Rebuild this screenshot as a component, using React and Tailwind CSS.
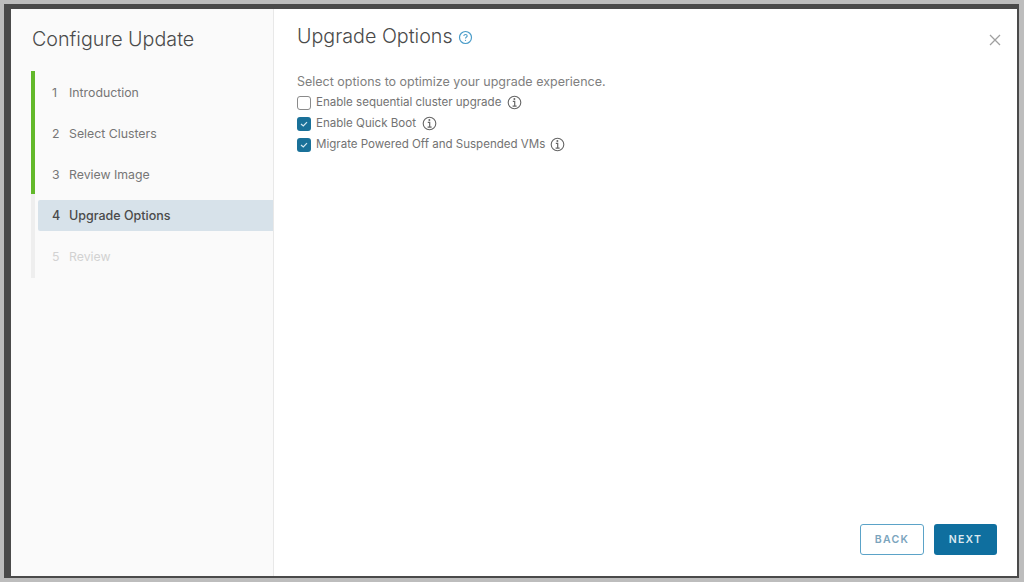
import React from "react";

function Info() {
  return (
    <svg width="15" height="15" viewBox="0 0 15 15" fill="none" stroke="#666" className="shrink-0">
      <circle cx="7.5" cy="7.5" r="6.3" strokeWidth="1.1" />
      <path d="M5.8 6.4H7.7V11M5.6 11.1H9.6" strokeWidth="1.2" />
      <circle cx="7.4" cy="4.1" r="1" fill="#666" stroke="none" />
    </svg>
  );
}

function Check({ checked }) {
  return checked ? (
    <span className="flex h-[14px] w-[14px] shrink-0 items-center justify-center rounded-[3px] bg-[#1a7199]">
      <svg width="10" height="10" viewBox="0 0 10 10" fill="none" stroke="#d5e8f1" strokeWidth="1.2">
        <path d="M2 5L4.3 7L8 3.2" />
      </svg>
    </span>
  ) : (
    <span className="h-[14px] w-[14px] shrink-0 rounded-[3px] border border-[#8a8a8a] bg-white" />
  );
}

function Option({ label, checked, gap }) {
  return (
    <div className="flex h-[21px] items-center">
      <Check checked={checked} />
      <span className="ml-[5px] text-[11.55px] text-[#737373]">{label}</span>
      <span className={gap}><Info /></span>
    </div>
  );
}

function Step({ n, label, state, bar, last }) {
  const rowCls =
    state === "active"
      ? "bg-[#d7e2ea] text-[#4a4a4a] font-medium text-[12.5px]"
      : state === "disabled"
        ? "text-[#d2d2d2] text-[12.3px]"
        : "text-[#767676] text-[12.3px]";
  return (
    <div className={`border-l-4 pl-[3px] pt-[6px] ${last ? "pb-[6px]" : "pb-[4px]"} ${bar}`}>
      <div className={`flex h-[31px] items-center rounded-l-[2px] pl-[14px] pt-[1px] ${rowCls}`}>
        <span className="w-[17px]">{n}</span>
        <span>{label}</span>
      </div>
    </div>
  );
}

export default function App() {
  return (
    <div className="h-[582px] w-[1024px] overflow-hidden bg-[#bdbdbd] pb-[4px] pl-[4px] pr-[5px] pt-[4px] font-['Inter',sans-serif]">
      <div className="h-full bg-[#4a4a4a] pb-[2px] pl-[7px] pr-[2px] pt-[5px]">
        <div className="flex h-full bg-white">
          <aside className="flex w-[263px] shrink-0 flex-col border-r border-[#e8e8e8] bg-[#fafafa] pl-[20px]">
            <h1 className="mt-[17px] h-[45px] pl-px text-[19.7px] font-light leading-[26px] text-[#4a4a4a]">Configure Update</h1>
            <div>
              <Step n="1" label="Introduction" bar="border-[#62b82a]" />
              <Step n="2" label="Select Clusters" bar="border-[#62b82a]" />
              <Step n="3" label="Review Image" bar="border-[#62b82a]" />
              <Step n="4" label="Upgrade Options" state="active" bar="border-[#eeeeee]" />
              <Step n="5" label="Review" state="disabled" bar="border-[#eeeeee]" last />
            </div>
          </aside>
          <main className="flex min-w-0 flex-1 flex-col pl-[23px] pr-[20px]">
            <div className="flex items-start justify-between">
              <div className="mt-[13px] flex items-center">
                <h2 className="pt-[1px] text-[19.7px] font-light leading-[26px] text-[#4a4a4a]">Upgrade Options</h2>
                <svg width="15" height="15" viewBox="0 0 14 14" fill="none" className="ml-[5px] mt-[3px]">
                  <circle cx="7" cy="7" r="5.6" stroke="#4a9cc9" strokeWidth="1.1" />
                  <path d="M5.4 5.6C5.5 4.6 6.2 4.2 7 4.2C7.9 4.2 8.6 4.7 8.6 5.5C8.6 6.5 7 6.6 7 7.9" stroke="#4a9cc9" strokeWidth="1" />
                  <circle cx="7" cy="9.6" r="0.6" fill="#4a9cc9" />
                </svg>
              </div>
              <svg width="14" height="14" viewBox="0 0 14 14" stroke="#a0a0a0" strokeWidth="1.3" className="-mr-[5px] mt-[24px]">
                <path d="M2 2L12 12M12 2L2 12" />
              </svg>
            </div>
            <p className="mt-[23px] text-[12.5px] leading-[20px] text-[#808080]">Select options to optimize your upgrade experience.</p>
            <div className="flex flex-col">
              <Option label="Enable sequential cluster upgrade" gap="ml-[6px]" />
              <Option label="Enable Quick Boot" checked gap="ml-[6px]" />
              <Option label="Migrate Powered Off and Suspended VMs" checked gap="ml-[5px]" />
            </div>
            <div className="mt-auto mb-[21px] flex justify-end gap-[10px]">
              <button className="h-[31px] w-[64px] rounded-[3px] border border-[#5ba3c8] bg-white text-[10.5px] font-semibold tracking-[1.3px] text-[#7ba4bd]">BACK</button>
              <button className="h-[31px] w-[63px] rounded-[3px] bg-[#0f6f9f] text-[10.5px] font-semibold tracking-[1.3px] text-[#dce9f0]">NEXT</button>
            </div>
          </main>
        </div>
      </div>
    </div>
  );
}
